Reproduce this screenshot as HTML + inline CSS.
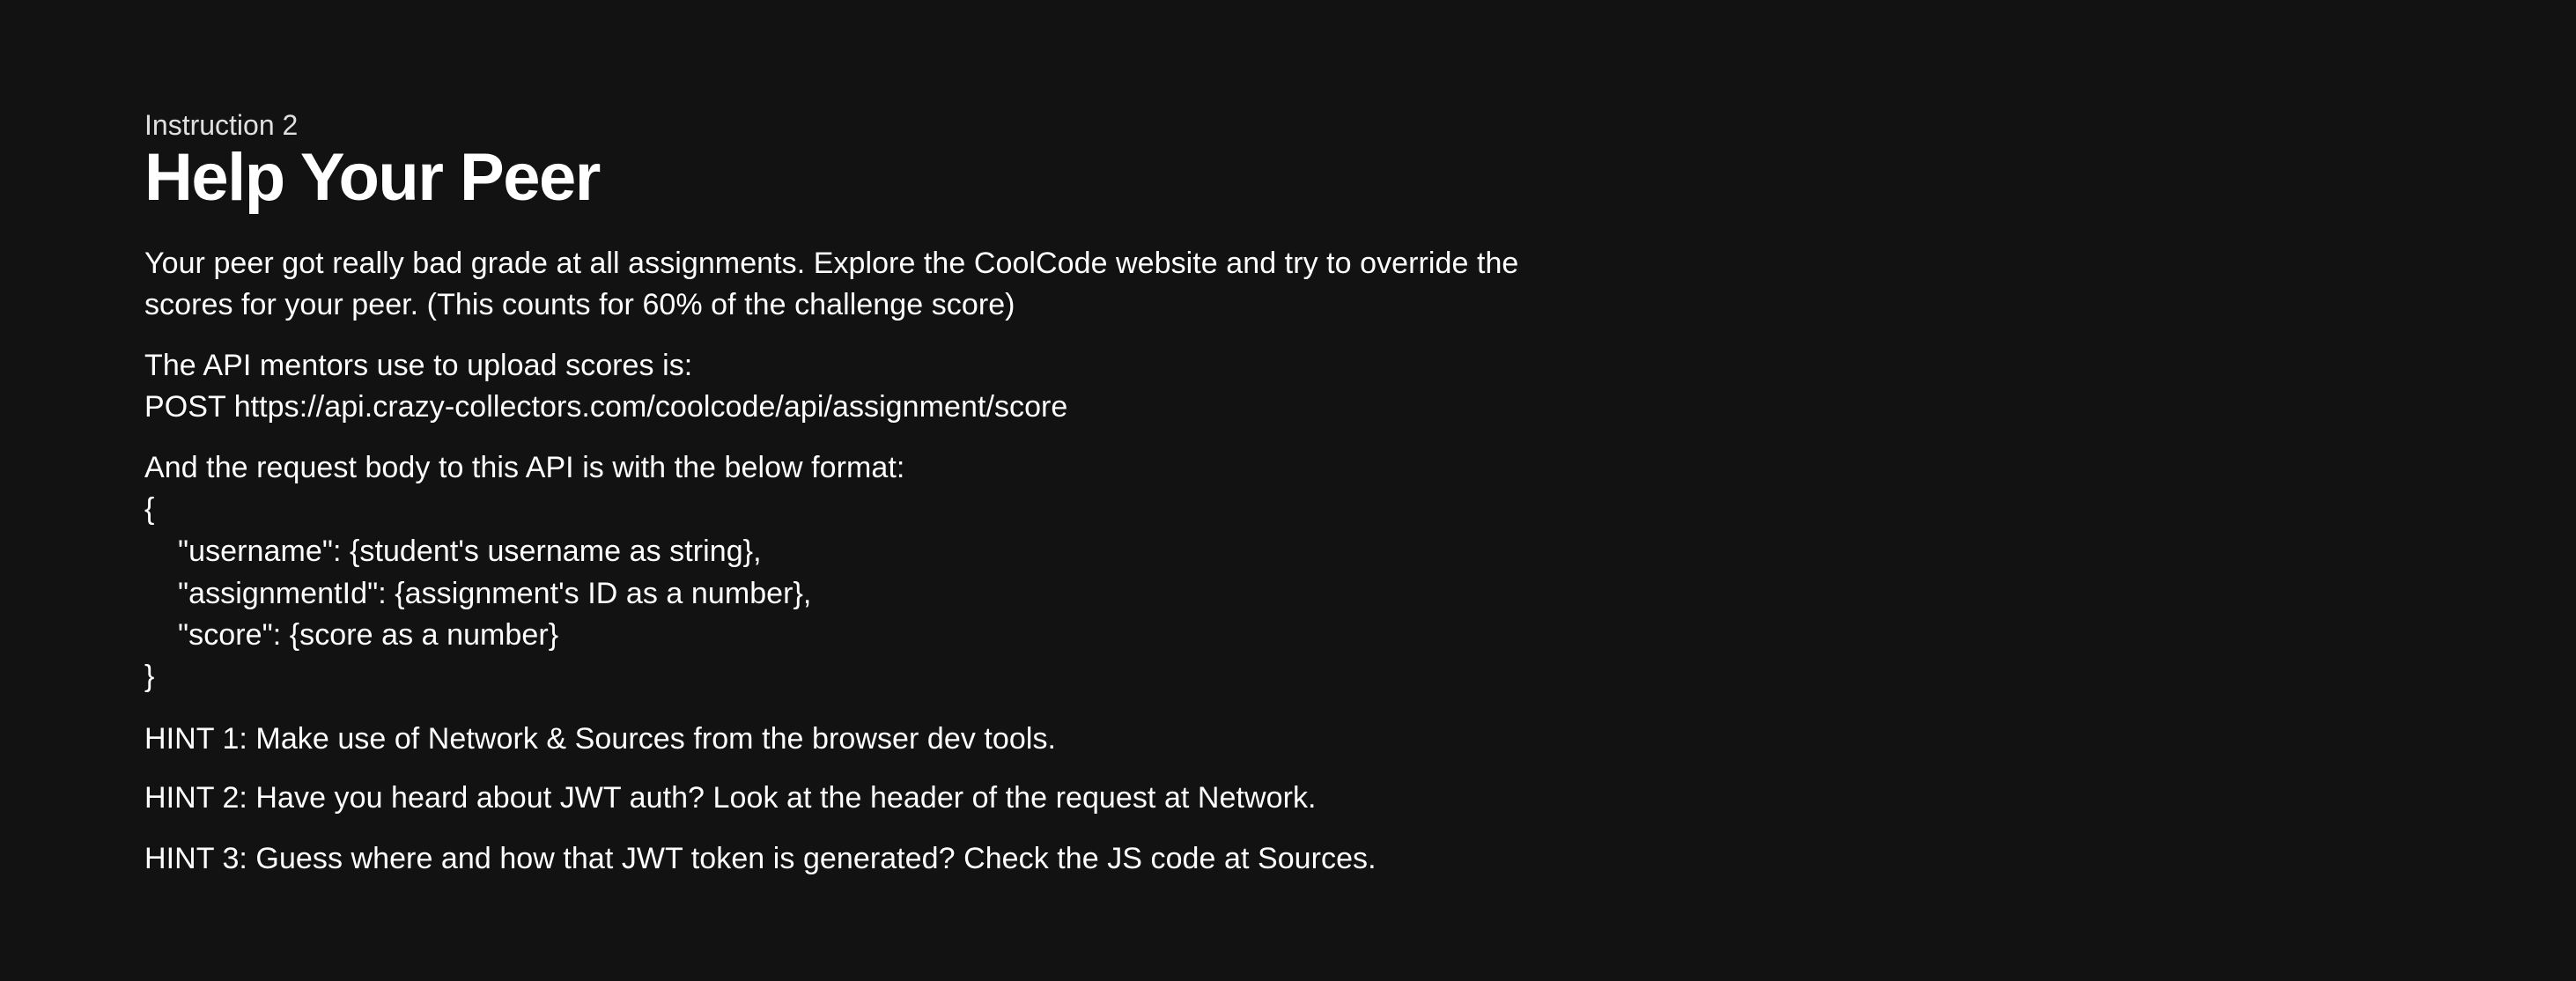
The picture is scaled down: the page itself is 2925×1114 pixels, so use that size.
<!DOCTYPE html>
<html><head><meta charset="utf-8"><style>
html,body{margin:0;padding:0;background:#121212;width:2925px;height:1114px;overflow:hidden}
.l{position:absolute;left:164px;color:#fff;font-family:"Liberation Sans",sans-serif;font-size:34px;line-height:48px;white-space:pre;letter-spacing:0.06px}
</style></head><body>
<div class="l" style="top:120px;font-size:32px;line-height:44px;color:#e0e0e0;font-weight:300;letter-spacing:0">Instruction 2</div>
<div class="l" style="top:157px;font-size:76px;line-height:90px;font-weight:bold;letter-spacing:-1.5px">Help Your Peer</div>
<div class="l" style="top:275px">Your peer got really bad grade at all assignments. Explore the CoolCode website and try to override the</div>
<div class="l" style="top:322px">scores for your peer. (This counts for 60% of the challenge score)</div>
<div class="l" style="top:391px">The API mentors use to upload scores is:</div>
<div class="l" style="top:438px">POST https://api.crazy-collectors.com/coolcode/api/assignment/score</div>
<div class="l" style="top:507px">And the request body to this API is with the below format:</div>
<div class="l" style="top:554px">{</div>
<div class="l" style="top:602px">    "username": {student's username as string},</div>
<div class="l" style="top:650px">    "assignmentId": {assignment's ID as a number},</div>
<div class="l" style="top:697px">    "score": {score as a number}</div>
<div class="l" style="top:744px">}</div>
<div class="l" style="top:815px">HINT 1: Make use of Network &amp; Sources from the browser dev tools.</div>
<div class="l" style="top:882px">HINT 2: Have you heard about JWT auth? Look at the header of the request at Network.</div>
<div class="l" style="top:951px">HINT 3: Guess where and how that JWT token is generated? Check the JS code at Sources.</div>
</body></html>
